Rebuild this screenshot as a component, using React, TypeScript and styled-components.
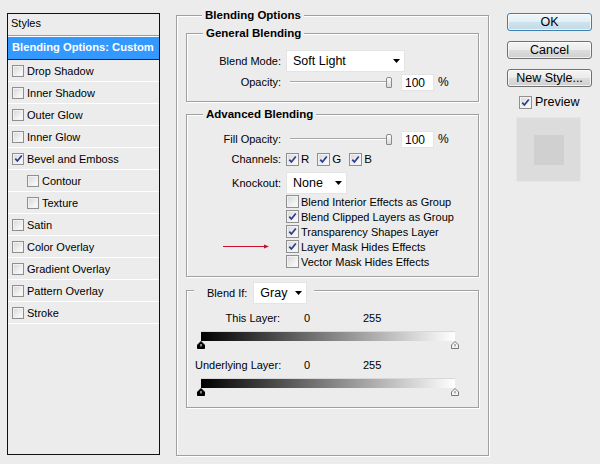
import styled, { createGlobalStyle } from 'styled-components';

const GlobalStyle = createGlobalStyle`
  html, body {
    margin: 0;
    padding: 0;
    background: #ececec;
  }
  body {
    font-family: "Liberation Sans", Arial, sans-serif;
    font-size: 11px;
    color: #000;
  }
`;

const Page = styled.div`
  display: flex;
  align-items: flex-start;
  width: 600px;
  height: 464px;
  box-sizing: border-box;
  padding-left: 7px;
  background: #ececec;
  overflow: hidden;
`;

/* ---------- left styles list ---------- */

const StylesPanel = styled.div`
  margin-top: 13px;
  width: 153px;
  height: 442px;
  box-sizing: border-box;
  border: 1px solid #111;
`;

const PanelHeader = styled.div`
  height: 22px;
  box-sizing: border-box;
  line-height: 19px;
  padding-left: 3px;
  border-bottom: 1px solid #9a9a9a;
`;

const ActiveRow = styled.div`
  height: 24px;
  box-sizing: border-box;
  line-height: 21px;
  padding-left: 4px;
  border-top: 1px solid #fff;
  border-bottom: 1px solid #222;
  background: #3399ff;
  color: #fff;
  font-weight: bold;
  font-size: 11.2px;
  white-space: nowrap;
`;

const StyleRow = styled.div<{ $indent?: boolean }>`
  display: flex;
  align-items: center;
  gap: 3px;
  height: 22px;
  box-sizing: border-box;
  padding-left: ${p => (p.$indent ? 19 : 4)}px;
  border-bottom: 1px solid #fff;
`;

/* ---------- checkbox ---------- */

const Box = styled.span<{ $size?: number }>`
  display: inline-flex;
  align-items: center;
  justify-content: center;
  flex: none;
  width: ${p => p.$size ?? 13}px;
  height: ${p => p.$size ?? 13}px;
  box-sizing: border-box;
  border: 1px solid #8e8f8f;
  background: linear-gradient(135deg, #d6d6d6 0%, #f4f4f4 70%, #fdfdfd 100%);
  box-shadow: inset 0 0 0 1px #f2f2f2;
`;

const Check = ({ on, size }: { on?: boolean; size?: number }) => (
  <Box $size={size}>
    {on && (
      <svg width="9" height="9" viewBox="0 0 9 9">
        <path d="M1.3 4.6 L3.4 7 L7.8 1.5" fill="none" stroke="#2a3a8c" strokeWidth="1.7" />
      </svg>
    )}
  </Box>
);

/* ---------- group boxes ---------- */

const MainGroup = styled.div`
  margin: 15px 0 0 16px;
  width: 313px;
  height: 441px;
  box-sizing: border-box;
  border: 1px solid #a0a0a0;
  box-shadow: inset 1px 1px 0 #fff, 1px 1px 0 #fff;
  padding: 0 9px;
`;

const GroupTitle = styled.div`
  width: fit-content;
  margin: -8px 0 0 16px;
  padding: 0 3px;
  background: #ececec;
  font-weight: bold;
  font-size: 11.5px;
  line-height: 14px;
`;

const SubGroup = styled.div<{ $top: number; $bottom: number; $pad?: string }>`
  margin-top: ${p => p.$top}px;
  border: 1px solid #a0a0a0;
  box-shadow: inset 1px 1px 0 #fff, 1px 1px 0 #fff;
  padding: ${p => p.$pad ?? `0 0 ${p.$bottom}px 0`};
`;

const FieldRow = styled.div<{ $h: number; $top: number }>`
  display: flex;
  align-items: center;
  height: ${p => p.$h}px;
  margin-top: ${p => p.$top}px;
`;

const FieldLabel = styled.div`
  width: 94px;
  margin-right: 5px;
  text-align: right;
  white-space: nowrap;
`;

const SelectBox = styled.div<{ $w: number }>`
  display: flex;
  align-items: center;
  justify-content: space-between;
  width: ${p => p.$w}px;
  height: 22px;
  box-sizing: border-box;
  padding: 0 4px 0 6px;
  background: #fff;
  border: 1px solid #e4e4e4;
  font-size: 12.5px;
`;

const Select = ({ value, width }: { value: string; width: number }) => (
  <SelectBox $w={width}>
    <span>{value}</span>
    <svg width="7" height="4" viewBox="0 0 7 4">
      <path d="M0 0 H7 L3.5 4 Z" fill="#000" />
    </svg>
  </SelectBox>
);

const Slider = styled.div`
  display: flex;
  align-items: center;
  width: 110px;
  height: 18px;
  box-sizing: border-box;
  padding-left: 4px;
`;

const Track = styled.div`
  width: 96px;
  height: 2px;
  box-sizing: border-box;
  border-top: 1px solid #a7a7a7;
  border-bottom: 1px solid #fff;
`;

const Thumb = styled.div`
  width: 6px;
  height: 11px;
  box-sizing: border-box;
  border: 1px solid #8a8a8a;
  border-radius: 2px 2px 1px 1px;
  background: linear-gradient(#fdfdfd, #d9d9d9);
`;

const NumberBox = styled.div`
  width: 33px;
  height: 17px;
  box-sizing: border-box;
  margin-left: 5px;
  padding: 1px 0 0 3px;
  background: #fff;
  border: 1px solid #e4e4e4;
  font-size: 12px;
  line-height: 14px;
`;

const Percent = styled.span`
  margin-left: 4px;
  font-size: 12px;
`;

const Channels = styled.div`
  display: flex;
  align-items: center;
  gap: 8px;
`;

const ChannelItem = styled.div`
  display: flex;
  align-items: center;
  gap: 2px;
  font-size: 11.5px;
`;

const OptionRow = styled.div`
  display: flex;
  align-items: center;
  height: 15px;
`;

const ArrowSlot = styled.div`
  display: flex;
  align-items: center;
  width: 99px;
  padding-left: 36px;
  box-sizing: border-box;
`;

const OptionText = styled.span`
  margin-left: 2px;
  white-space: nowrap;
  font-size: 11px;
`;

const BlendTitle = styled.div`
  display: flex;
  align-items: center;
  width: fit-content;
  height: 21px;
  margin: -9px 0 0 -1px;
  padding: 0 7px 0 13px;
  background: #ececec;
  gap: 6px;
`;

const LevelRow = styled.div<{ $top: number }>`
  display: flex;
  align-items: center;
  height: 14px;
  margin-top: ${p => p.$top}px;
`;

const LevelLabel = styled.div`
  width: 85px;
  text-align: right;
  white-space: nowrap;
`;

const LevelValue = styled.div<{ $w?: number }>`
  width: ${p => p.$w ?? 30}px;
`;

const GradientBar = styled.div`
  margin: 6px 0 0 6px;
  width: 254px;
  height: 10px;
  background: linear-gradient(to right, #000 0%, #fff 100%);
  border-top: 1px solid #d8d8d8;
  box-sizing: border-box;
`;

const Markers = styled.div`
  display: flex;
  justify-content: space-between;
  width: 262px;
  height: 8px;
  margin-left: 2px;
`;

const Marker = ({ dark }: { dark?: boolean }) => (
  <svg width="8" height="8" viewBox="0 0 8 8">
    <path
      d="M0.5 7.5 V4 L4 0.5 L7.5 4 V7.5 Z"
      fill={dark ? '#000' : '#f4f4f4'}
      stroke={dark ? '#000' : '#777'}
      strokeWidth="1"
    />
    <path d="M4 3 V5.5" stroke={dark ? '#fff' : '#777'} strokeWidth="1" />
  </svg>
);

/* ---------- right column ---------- */

const SideColumn = styled.div`
  display: flex;
  flex-direction: column;
  margin: 13px 0 0 18px;
  width: 85px;
`;

const DialogButton = styled.button<{ $primary?: boolean }>`
  width: 85px;
  height: 18px;
  margin: 0 0 10px 0;
  padding: 0;
  box-sizing: border-box;
  border: 1px solid ${p => (p.$primary ? '#3c7fb1' : '#707070')};
  border-radius: 3px;
  background: ${p =>
    p.$primary
      ? 'linear-gradient(#eef6fb 0%, #e2eff7 50%, #cfe3ef 51%, #c2d9e7 100%)'
      : 'linear-gradient(#f4f4f4 0%, #ebebeb 50%, #dddddd 51%, #cfcfcf 100%)'};
  box-shadow: inset 0 0 0 1px rgba(255, 255, 255, 0.7);
  font-family: "Liberation Sans", Arial, sans-serif;
  font-size: 12.5px;
  line-height: 15px;
  color: #000;
`;

const PreviewToggle = styled.div`
  display: flex;
  align-items: center;
  gap: 3px;
  height: 14px;
  margin: -2px 0 0 12px;
  font-size: 12.5px;
`;

const PreviewSwatch = styled.div`
  display: flex;
  align-items: center;
  justify-content: center;
  width: 65px;
  height: 65px;
  margin: 8px 0 0 9px;
  box-sizing: border-box;
  background: #dcdcdc;
  border: 1px solid #e6e6e6;
`;

const PreviewInner = styled.div`
  width: 30px;
  height: 30px;
  background: #d0d0d0;
`;

const styleItems: { label: string; on?: boolean; indent?: boolean }[] = [
  { label: 'Drop Shadow' },
  { label: 'Inner Shadow' },
  { label: 'Outer Glow' },
  { label: 'Inner Glow' },
  { label: 'Bevel and Emboss', on: true },
  { label: 'Contour', indent: true },
  { label: 'Texture', indent: true },
  { label: 'Satin' },
  { label: 'Color Overlay' },
  { label: 'Gradient Overlay' },
  { label: 'Pattern Overlay' },
  { label: 'Stroke' },
];

const options: { label: string; on: boolean; marked?: boolean }[] = [
  { label: 'Blend Interior Effects as Group', on: false },
  { label: 'Blend Clipped Layers as Group', on: true },
  { label: 'Transparency Shapes Layer', on: true },
  { label: 'Layer Mask Hides Effects', on: true, marked: true },
  { label: 'Vector Mask Hides Effects', on: false },
];

const OpacityControl = () => (
  <>
    <Slider>
      <Track />
      <Thumb />
    </Slider>
    <NumberBox>100</NumberBox>
    <Percent>%</Percent>
  </>
);

export default function App() {
  return (
    <>
      <GlobalStyle />
      <Page>
        <StylesPanel>
          <PanelHeader>Styles</PanelHeader>
          <ActiveRow>Blending Options: Custom</ActiveRow>
          {styleItems.map(item => (
            <StyleRow key={item.label} $indent={item.indent}>
              <Check on={item.on} size={12} />
              <span>{item.label}</span>
            </StyleRow>
          ))}
        </StylesPanel>

        <MainGroup>
          <GroupTitle>Blending Options</GroupTitle>

          <SubGroup $top={11} $bottom={10}>
            <GroupTitle>General Blending</GroupTitle>
            <FieldRow $h={22} $top={10}>
              <FieldLabel>Blend Mode:</FieldLabel>
              <Select value="Soft Light" width={119} />
            </FieldRow>
            <FieldRow $h={18} $top={1}>
              <FieldLabel>Opacity:</FieldLabel>
              <OpacityControl />
            </FieldRow>
          </SubGroup>

          <SubGroup $top={12} $bottom={7}>
            <GroupTitle>Advanced Blending</GroupTitle>
            <FieldRow $h={18} $top={9}>
              <FieldLabel>Fill Opacity:</FieldLabel>
              <OpacityControl />
            </FieldRow>
            <FieldRow $h={16} $top={3}>
              <FieldLabel>Channels:</FieldLabel>
              <Channels>
                {['R', 'G', 'B'].map(c => (
                  <ChannelItem key={c}>
                    <Check on />
                    <span>{c}</span>
                  </ChannelItem>
                ))}
              </Channels>
            </FieldRow>
            <FieldRow $h={22} $top={5}>
              <FieldLabel>Knockout:</FieldLabel>
              <Select value="None" width={61} />
            </FieldRow>
            {options.map(o => (
              <OptionRow key={o.label}>
                <ArrowSlot>
                  {o.marked && (
                    <svg width="46" height="7" viewBox="0 0 46 7">
                      <path d="M0 3.5 H43" stroke="#c8102e" strokeWidth="1" />
                      <path d="M41 1.5 L46 3.5 L41 5.5 Z" fill="#c8102e" />
                    </svg>
                  )}
                </ArrowSlot>
                <Check on={o.on} />
                <OptionText>{o.label}</OptionText>
              </OptionRow>
            ))}
          </SubGroup>

          <SubGroup $top={13} $bottom={11} $pad="0 21px 11px 8px">
            <BlendTitle>
              <span>Blend If:</span>
              <Select value="Gray" width={54} />
            </BlendTitle>
            <LevelRow $top={8}>
              <LevelLabel>This Layer:</LevelLabel>
              <LevelValue $w={24} />
              <LevelValue $w={59}>0</LevelValue>
              <LevelValue>255</LevelValue>
            </LevelRow>
            <GradientBar />
            <Markers>
              <Marker dark />
              <Marker />
            </Markers>
            <LevelRow $top={9}>
              <LevelLabel>Underlying Layer:</LevelLabel>
              <LevelValue $w={24} />
              <LevelValue $w={59}>0</LevelValue>
              <LevelValue>255</LevelValue>
            </LevelRow>
            <GradientBar />
            <Markers>
              <Marker dark />
              <Marker />
            </Markers>
          </SubGroup>
        </MainGroup>

        <SideColumn>
          <DialogButton $primary>OK</DialogButton>
          <DialogButton>Cancel</DialogButton>
          <DialogButton>New Style...</DialogButton>
          <PreviewToggle>
            <Check on />
            <span>Preview</span>
          </PreviewToggle>
          <PreviewSwatch>
            <PreviewInner />
          </PreviewSwatch>
        </SideColumn>
      </Page>
    </>
  );
}
